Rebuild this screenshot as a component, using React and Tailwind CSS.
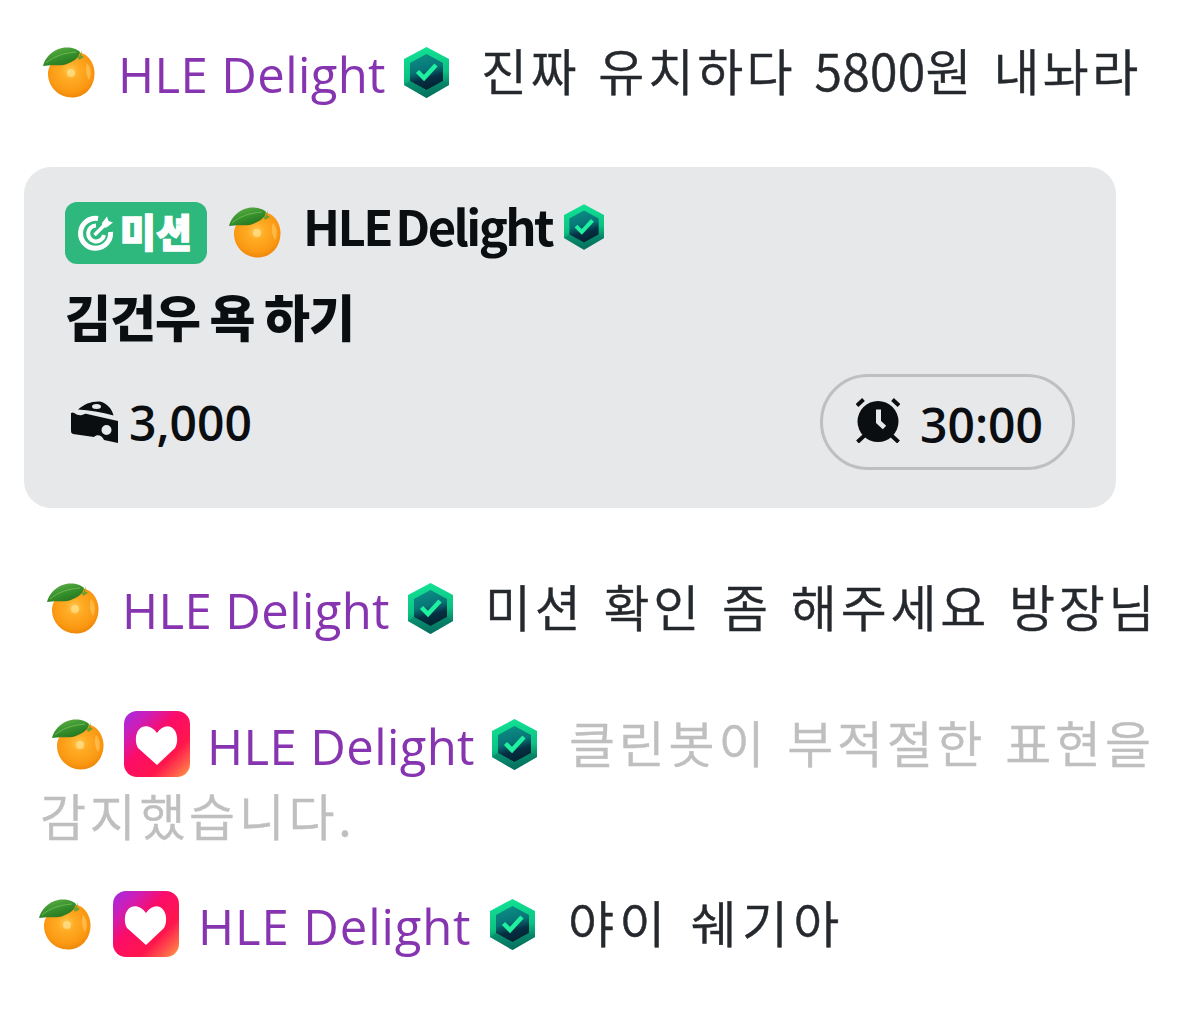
import React from "react";

// Orange fruit badge shown before every nickname
const Orange = ({ className = "" }) => (
  <svg viewBox="0 0 52 51" className={`w-[52px] h-[51px] shrink-0 ${className}`}>
    <defs>
      <radialGradient id="peel" cx="0.48" cy="0.42" r="0.62">
        <stop offset="0" stopColor="#ffc94f" />
        <stop offset="0.3" stopColor="#ffab24" />
        <stop offset="0.75" stopColor="#fb9812" />
        <stop offset="1" stopColor="#e98208" />
      </radialGradient>
      <linearGradient id="leaf" x1="0" y1="0" x2="0.6" y2="1">
        <stop offset="0" stopColor="#67b64b" />
        <stop offset="0.6" stopColor="#35902c" />
        <stop offset="1" stopColor="#27741f" />
      </linearGradient>
    </defs>
    <path
      d="M29 6C41 2 51 13 51.500 25C52 40 42 50.500 29 50.500C15 50.500 5 39 5 27C5 15 17 5 29 6Z"
      fill="url(#peel)"
    />
    <path d="M44 16C48 20 49 27 46 33C43 29 42 21 44 16Z" fill="#ffc45a" opacity="0.7" />
    <circle cx="28" cy="26" r="4" fill="#ffe08c" opacity="0.75" />
    <path d="M33 6L36 10L39 3L38 8L41 10L36 13Z" fill="#6f9f2c" />
    <path
      d="M0 19C2 11 9 3 19 1C27 -0.500 34 2 37 5C36 11 31 14 26 16C19 20 10 17 0 19Z"
      fill="url(#leaf)"
    />
    <path d="M3 16C11 9 21 6 33 5" stroke="#8bcc66" strokeWidth="1" fill="none" opacity="0.6" />
  </svg>
);

// Green hexagon with a check mark
const Verified = ({ className = "" }) => (
  <svg viewBox="0 0 45 51" className={`shrink-0 ${className}`}>
    <defs>
      <linearGradient id="hexEdge" x1="0" y1="0" x2="0.15" y2="1">
        <stop offset="0" stopColor="#12e696" />
        <stop offset="0.6" stopColor="#0cc283" />
        <stop offset="1" stopColor="#066058" />
      </linearGradient>
      <linearGradient id="hexFill" x1="0.3" y1="0" x2="0.55" y2="1">
        <stop offset="0" stopColor="#0b8f85" />
        <stop offset="0.45" stopColor="#087477" />
        <stop offset="0.7" stopColor="#052f43" />
        <stop offset="1" stopColor="#03222f" />
      </linearGradient>
    </defs>
    <path d="M22.500 0L45 12V38L22.500 51L0 38V12Z" fill="url(#hexEdge)" />
    <path d="M22.500 7L39 16V34L22.500 43L6 34V16Z" fill="url(#hexFill)" />
    <path d="M6 34L22.500 43L39 34L45 38L22.500 51L0 38Z" fill="#078168" opacity="0.6" />
    <path d="M13.500 24.500L20 31L32 18" stroke="#1ff0a0" strokeWidth="4.500" fill="none" />
  </svg>
);

const HeartBadge = ({ className = "" }) => (
  <svg viewBox="0 0 66 66" className={`w-[66px] h-[66px] shrink-0 ${className}`}>
    <defs>
      <linearGradient id="heartBg" x1="0" y1="0" x2="1" y2="1">
        <stop offset="0" stopColor="#a32be2" />
        <stop offset="0.2" stopColor="#cb1fba" />
        <stop offset="0.42" stopColor="#fb0c68" />
        <stop offset="0.7" stopColor="#ff164c" />
        <stop offset="0.86" stopColor="#ff5a4b" />
        <stop offset="1" stopColor="#ffa340" />
      </linearGradient>
    </defs>
    <rect width="66" height="66" rx="13" fill="url(#heartBg)" />
    <path
      d="M33 54L14 37C11 32 11 23 15 18.500C20 13 28 15 33 22C38 15 45 13 50 18.500C54 23 54 32 51 37Z"
      fill="#fff"
    />
  </svg>
);

const TargetIcon = () => (
  <svg viewBox="0 0 36 36" className="w-9 h-9 shrink-0" fill="none" stroke="#fff">
    <path d="M20 3.500A15 15 0 1 0 32.500 17" strokeWidth="5" />
    <path d="M18 10.500A8 8 0 1 0 26 20" strokeWidth="4" />
    <path d="M16.500 20L27 9.500" strokeWidth="3.500" />
    <path d="M24 8L29 1.500L30.500 6L35 7.500L28.500 12.500L24 12.500Z" fill="#fff" stroke="none" />
  </svg>
);

const CheeseIcon = () => (
  <svg viewBox="0 0 48 42" className="w-12 h-[42px] shrink-0" fill="#0b0e11">
    <path
      fillRule="evenodd"
      d="M7 8.500C13 3 21 0 29 0.500C36 2 41 8 42.500 14.500C31 11 18 9 7 8.500ZM21 5.500A4.500 2.500 0 1 0 30 5.500A4.500 2.500 0 1 0 21 5.500Z"
    />
    <path
      fillRule="evenodd"
      d="M0 12C3 10 4.500 14 8 14C12 15 13 12 16 13L47 20V42L33 39C31 34 26 33 23 36L2 33C0 32 0 31 0 29ZM30.500 29A5 5 0 1 0 40.500 29A5 5 0 1 0 30.500 29Z"
    />
  </svg>
);

const AlarmIcon = () => (
  <svg viewBox="0 0 44 45" className="-mt-1 w-11 h-[45px] shrink-0" fill="none" stroke="#0b0e11">
    <circle cx="22" cy="23.500" r="20.500" fill="#0b0e11" stroke="none" />
    <path d="M1 7.500L7.500 1.500M36.500 1.500L43 7.500" strokeWidth="4" />
    <path d="M9 37L1.500 44M35 37L42.500 44" strokeWidth="4" />
    <path d="M22.500 11.500V24L28.500 29.500" stroke="#e7e8ea" strokeWidth="5" />
  </svg>
);

const NickName = ({ className = "" }) => (
  <span
    className={`shrink-0 whitespace-nowrap pt-1 font-['Open_Sans',sans-serif] text-[49px] leading-none font-normal text-[#8634b0] ${className}`}
  >
    HLE Delight
  </span>
);

const Message = ({ className = "", children }) => (
  <span
    className={`shrink-0 whitespace-nowrap pb-1.5 font-['Noto_Sans_CJK_KR',sans-serif] text-[50px] leading-none font-[350] [word-spacing:4px] [-webkit-text-stroke:0.5px_currentColor] ${className}`}
  >
    {children}
  </span>
);

const MissionCard = () => (
  <section className="mt-[23px] ml-6 flex h-[341px] w-[1092px] flex-col rounded-[27px] bg-[#e7e8ea] pl-[41px] pr-[41px] pt-[35px] text-[#0b0e11]">
    <div className="flex h-[62px]">
      <div className="flex h-[62px] w-[142px] shrink-0 items-center rounded-xl bg-[#2fb87e] pl-[13px]">
        <TargetIcon />
        <span className="ml-1.5 whitespace-nowrap pb-1.5 font-['Noto_Sans_CJK_KR',sans-serif] text-[39px] leading-none font-black text-white [-webkit-text-stroke:1.5px_#fff]">
          미션
        </span>
      </div>
      <Orange className="ml-[22px] mt-[5px]" />
      <span className="ml-[22px] w-[261px] shrink-0 whitespace-nowrap font-['Noto_Sans_CJK_KR',sans-serif] text-[49px] leading-[46px] font-bold tracking-[-2.6px] [word-spacing:-4px]">
        HLE Delight
      </span>
      <Verified className="mt-0.5 h-[46px] w-10" />
    </div>
    <h2 className="mt-[26px] mb-[34px] whitespace-nowrap font-['Noto_Sans_CJK_KR',sans-serif] text-[50px] leading-[50px] font-black tracking-[-1px] [word-spacing:-1px]">
      김건우 욕 하기
    </h2>
    <div className="flex h-24 items-center justify-between">
      <div className="flex items-center pl-1.5">
        <CheeseIcon />
        <span className="ml-2.5 pt-0.5 font-['Open_Sans',sans-serif] text-[48px] leading-none font-semibold">
          3,000
        </span>
      </div>
      <div className="flex h-24 w-[255px] items-center rounded-full border-[3px] border-[#bdbfc1] pl-[33px]">
        <AlarmIcon />
        <span className="ml-[20px] pt-1.5 font-['Open_Sans',sans-serif] text-[48px] leading-none font-semibold">
          30:00
        </span>
      </div>
    </div>
  </section>
);

const App = () => {
  return (
    <main className="flex h-[1030px] w-[1200px] flex-col overflow-hidden bg-white">
      <div className="flex h-36 items-center pl-[43px]">
        <Orange />
        <NickName className="ml-[23px] w-[286px] tracking-[0.4px]" />
        <Verified className="h-[51px] w-[45px]" />
        <Message className="ml-8 tracking-[3.4px] text-[#25282c]">
          진짜 유치하다 <span className="tracking-[0.3px]">5800</span>원 내놔라
        </Message>
      </div>

      <MissionCard />

      <div className="flex h-[200px] items-center pl-[47px]">
        <Orange />
        <NickName className="ml-[23px] w-[286px] tracking-[0.4px]" />
        <Verified className="h-[51px] w-[45px]" />
        <Message className="ml-8 tracking-[3.8px] text-[#25282c]">
          미션 확인 좀 해주세요 방장님
        </Message>
      </div>

      {/* Message hidden by the clean bot, wraps to a second line */}
      <div className="flex h-[72px] items-center pl-[52px]">
        <Orange />
        <HeartBadge className="ml-5" />
        <NickName className="ml-[17px] w-[285px] tracking-[0.4px]" />
        <Verified className="h-[51px] w-[45px]" />
        <Message className="ml-8 tracking-[3.8px] text-[#bfbfbf]">클린봇이 부적절한 표현을</Message>
      </div>
      <div className="flex h-[74px] items-center pl-[40px]">
        <Message className="tracking-[3.7px] text-[#bfbfbf]">감지했습니다.</Message>
      </div>

      <div className="flex h-[140px] items-center pl-[39px]">
        <Orange />
        <HeartBadge className="ml-[22px]" />
        <NickName className="ml-[19px] w-[292px] tracking-[0.9px]" />
        <Verified className="h-[51px] w-[45px]" />
        <Message className="ml-[33px] tracking-[5.2px] text-[#25282c]">야이 쉐기아</Message>
      </div>
    </main>
  );
};

export default App;
